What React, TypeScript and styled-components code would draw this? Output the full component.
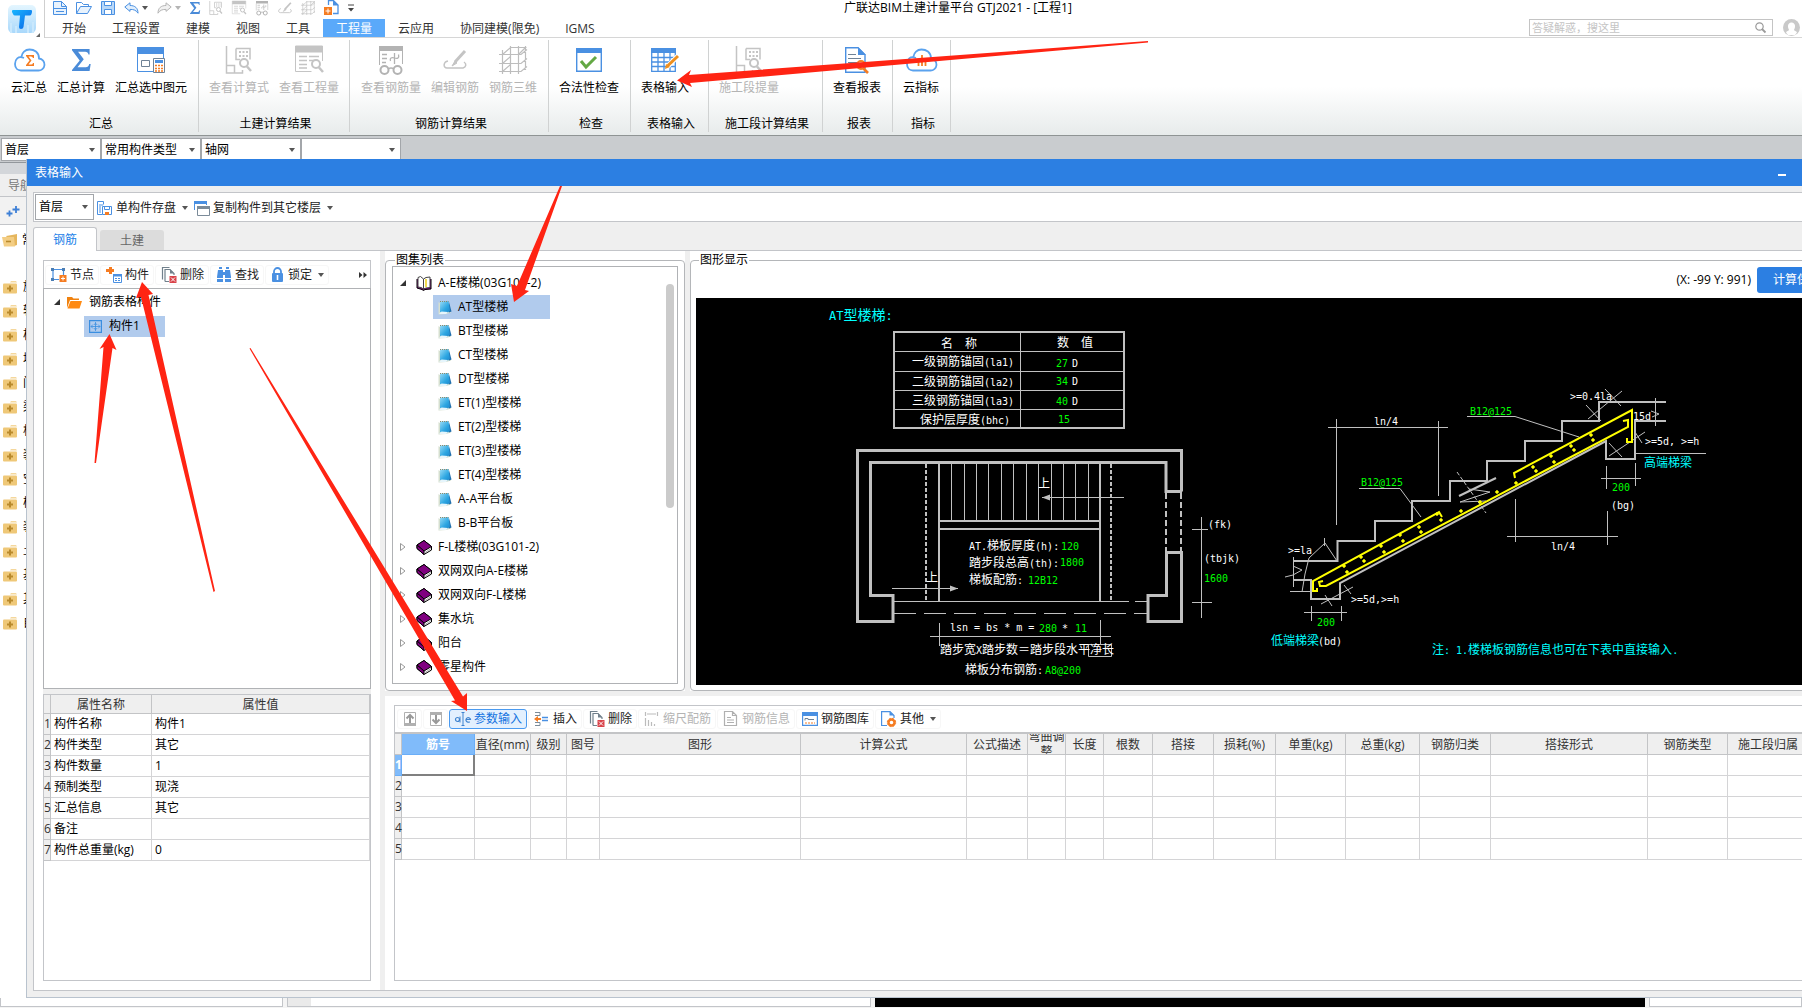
import React from 'react';
import styled, { createGlobalStyle, css } from 'styled-components';

const GlobalStyle = createGlobalStyle`
  *, *::before, *::after { box-sizing: border-box; }
  body {
    margin: 0;
    overflow: hidden;
    color: #000;
    background: #fff;
    font: 12px/16px "Open Sans", "Noto Sans CJK SC", sans-serif;
  }
  button, input, select { font: inherit; color: inherit; margin: 0; }
  button { border: 0; padding: 0; background: none; white-space: nowrap; }
  ul { list-style: none; margin: 0; padding: 0; }
`;

const BLUE = '#4a90e2';
const ORANGE = '#f57c22';
const LINE = '#c3c5c9';

/* ---------- icons ---------- */

const Svg = styled.svg`
  display: block;
  flex: none;
  fill: none;
  overflow: visible;
`;

type IconProps = { off?: boolean };

const Caret = ({ color = '#555' }: { color?: string }) => (
  <Svg width="6" height="4" viewBox="0 0 6 4"><path d="M0 0h6L3 4z" fill={color} /></Svg>
);

const LogoIcon = () => (
  <Svg width="28" height="28" viewBox="0 0 28 28">
    <defs>
      <linearGradient id="logoBg" x1="0" y1="0" x2="0" y2="1">
        <stop offset="0" stopColor="#e4f6ff" /><stop offset="1" stopColor="#a9d8fb" />
      </linearGradient>
      <linearGradient id="logoT" x1="0" y1="0" x2="1" y2="1">
        <stop offset="0" stopColor="#19b6ff" /><stop offset="1" stopColor="#0a63e6" />
      </linearGradient>
    </defs>
    <rect width="28" height="28" rx="5" fill="url(#logoBg)" />
    <path d="M3 28V18M8 28v-7M20 28v-8M25 28V17" stroke="#c9e8fd" strokeWidth="2" />
    <path d="M5 5h18q1.500 0 1 2l-.5 2q-.5 1.500-2 1.500H17L15.500 22q-.3 2-2.500 2t-2-2L12 10.500H7q-1.500 0-2-1.500l-1-2q-.5-2 1-2z" fill="url(#logoT)" />
  </Svg>
);

const NewDocIcon = () => (
  <Svg width="14" height="14" viewBox="0 0 14 14" stroke={BLUE}>
    <path d="M.5 13.500V.5h8l5 5v8z" fill="#e9f3fd" /><path d="M8.500.5v5h5M.5 7.500h13M3 10.500h8" />
  </Svg>
);
const OpenIcon = () => (
  <Svg width="16" height="14" viewBox="0 0 16 14" stroke={BLUE}>
    <path d="M.5 12.500V1.500h5l2 2h5v2" /><path d="M.5 12.500l4-7h11l-4 7z" fill="#e9f3fd" />
  </Svg>
);
const SaveIcon = () => (
  <Svg width="14" height="14" viewBox="0 0 14 14" stroke={BLUE}>
    <path d="M.5.5h13v13H.5z" fill="#b9d8f8" /><path d="M3.500.5h7v4h-7zM3.500 8.500h7v5h-7z" fill="#fff" />
  </Svg>
);
const UndoIcon = ({ off, flip }: IconProps & { flip?: boolean }) => (
  <Svg width="15" height="12" viewBox="0 0 15 12" stroke={off ? '#b5b5b5' : BLUE}>
    <path
      transform={flip ? 'matrix(-1 0 0 1 15 0)' : undefined}
      d="M.8 5L6 .8v2.700c5 0 8 2.500 8 7.700-2-3-4-3.800-8-3.800v2z"
      fill={off ? '#f1f1f1' : '#e2effc'}
    />
  </Svg>
);
const SigmaIcon = ({ size = 22, color = '#4a8bd8' }: { size?: number; color?: string }) => (
  <Svg width={size * 0.85} height={size} viewBox="0 0 17 20">
    <path d="M0 0h16v5h-1c-.4-1.800-1.200-2.600-3-2.600H5.500l5.200 7-5.700 7.200h7.500c1.700 0 2.700-1 3.200-2.900H17L16 20H0v-1l7-8.500L0 1.200z" fill={color} />
  </Svg>
);
const MagnifyMark = ({ x, y, color }: { x: number; y: number; color: string }) => (
  <g transform={`translate(${x} ${y})`}>
    <circle cx="5" cy="5" r="4" fill="#fff" stroke={color} strokeWidth="2" />
    <path d="M8 8.500l4 4.500" stroke={color} strokeWidth="2.500" />
  </g>
);
const PlanSearchIcon = ({ size = 28 }: { size?: number }) => (
  <Svg width={size} height={size} viewBox="0 0 28 28" stroke="#c4c4c4">
    <path d="M1.500 0v27h16v-3M1.500 19.500h8v7.500M11 2.500h14v11" strokeWidth="1.500" />
    <path d="M11 2.500v11h4" strokeWidth="1.500" />
    <path d="M14 6h9M14 10h9" strokeWidth="2" strokeDasharray="2 1.500" />
    <MagnifyMark x={14} y={12} color="#c4c4c4" />
  </Svg>
);
const ReportSearchIcon = ({ size = 28 }: { size?: number }) => (
  <Svg width={size} height={size} viewBox="0 0 28 28" stroke="#c4c4c4">
    <path d="M.5 0h27v6H.5z" fill="#c4c4c4" /><path d="M.5 6v19.500h16M27.500 6v9" />
    <path d="M4 10.500h8M14 10.500h10M4 14.500h8M14 14.500h5M4 18.500h8M4 22h8" strokeWidth="1.300" />
    <MagnifyMark x={16} y={13} color="#c4c4c4" />
  </Svg>
);
const GlassesIcon = ({ size = 28 }: { size?: number }) => (
  <Svg width={size} height={size} viewBox="0 0 28 28" stroke="#b3b3b3">
    <path d="M2 0h24v5H2z" fill="#b3b3b3" stroke="none" /><path d="M2.500 5v14M25.500 5v13" />
    <path d="M5 8.500h5M5 12.500h5M5 16.500h4M17.500 7v11M13.500 15c-1-3 1-4 4-3s5 0 4-3.500" strokeWidth="1.300" />
    <circle cx="7.500" cy="24" r="4" strokeWidth="2" fill="#fff" /><circle cx="20.500" cy="24" r="4" strokeWidth="2" fill="#fff" />
    <path d="M11 23q3-2 6 0" strokeWidth="1.500" />
  </Svg>
);
const PenIcon = ({ size = 24 }: { size?: number }) => (
  <Svg width={size} height={size} viewBox="0 0 24 24" stroke="#c4c4c4">
    <path d="M5 13c-5 1-5 7-1 7h16c3-1 4-4 1-6" strokeWidth="1.500" />
    <path d="M22 3L12 14" strokeWidth="3" /><path d="M12 13l-3 5 5-3z" fill="#c4c4c4" />
  </Svg>
);
const MeshIcon = ({ size = 28 }: { size?: number }) => (
  <Svg width={size} height={size} viewBox="0 0 28 28" stroke="#bdbdbd" strokeWidth="1.200">
    <path d="M3.500 4v24M11.500 0v28M19.500 0v28M26.500 0v24M0 8.500h22l6-5M0 17.500h22l6-5M0 25.500h22l6-5M3.500 8.500l8-7h16M3.500 17.500l8-7M3.500 25.500l8-7M19.500 8.500l7-7" />
  </Svg>
);
const CloudIcon = ({ children }: { children?: React.ReactNode }) => (
  <Svg width="31" height="24" viewBox="0 0 31 24">
    <path d="M7 22.500h17a6 6 0 0 0 1-12C25 4 20 1.500 15.500 1.500S8 5 7.500 8.500M10 10C4 7.500 1 11.500 1 16s3 6.500 6 6.500" stroke="#5aa2ee" strokeWidth="1.800" />
    {children}
  </Svg>
);
const CloudSumIcon = () => (
  <CloudIcon><path d="M12 7h8v3h-1q-.4-1.500-2-1.500h-2.500l3 4-3 4H17q1.700 0 2-1.500h1V18h-8v-1l3.500-4.500L12 8z" fill={ORANGE} /></CloudIcon>
);
const CloudChartIcon = () => (
  <CloudIcon><path d="M12.500 18v-6M16 18V7M19.500 18v-8" stroke={ORANGE} strokeWidth="1.800" /></CloudIcon>
);
const PickedSumIcon = () => (
  <Svg width="28" height="26" viewBox="0 0 28 26">
    <path d="M0 0h27v7H0z" fill={BLUE} /><path d="M.5 7v17.500H16M26.500 7v4" stroke={BLUE} />
    <path d="M4.500 13.500h8v6h-8z" stroke="#6f8296" />
    <path d="M16.500 11.500h11v14h-11z" stroke="#6f8296" fill="#fff" /><path d="M18 13h8v3h-8z" fill={BLUE} />
    <path d="M18 18.500h8M18 21.500h8M18 24h8" stroke={ORANGE} strokeWidth="1.500" strokeDasharray="2 1" />
  </Svg>
);
const CheckIcon = () => (
  <Svg width="26" height="24" viewBox="0 0 26 24">
    <path d="M.7.7h24.600v22.600H.7z" stroke={BLUE} strokeWidth="1.400" /><path d="M0 0h26v5H0z" fill={BLUE} />
    <path d="M5 13l5 6L20 9" stroke="#63a844" strokeWidth="3" />
  </Svg>
);
const GridPencilIcon = () => (
  <Svg width="28" height="24" viewBox="0 0 28 24">
    <path d="M0 0h25v5H0z" fill={BLUE} />
    <path d="M.7 4v19.300h23.600V4M.7 9.500h23.600M.7 14h23.600M.7 18.500h23.600M7 5v18M13 5v18M19 5v18" stroke={BLUE} strokeWidth="1.300" />
    <path d="M27 8L16 19" stroke="#fff" strokeWidth="5" /><path d="M27 8L16.500 18" stroke="#ef8f1d" strokeWidth="3" /><path d="M15 16l-1 5 5-2z" fill="#ef8f1d" />
  </Svg>
);
const PageSearchIcon = () => (
  <Svg width="24" height="27" viewBox="0 0 24 27">
    <path d="M.7.7H13l7 7v17.600H.7z" stroke={BLUE} strokeWidth="1.400" /><path d="M13 0l8 8h-8z" fill={BLUE} />
    <path d="M3 7.500h8M3 11.500h13M3 15.500h10M3 19.500h8" stroke="#6f8296" strokeWidth="1.200" />
    <circle cx="16" cy="18" r="4" stroke={ORANGE} strokeWidth="2" fill="#fff" /><path d="M18 21l5 5" stroke={ORANGE} strokeWidth="2.600" />
  </Svg>
);
const AddDocIcon = () => (
  <Svg width="15" height="15" viewBox="0 0 15 15">
    <path d="M4.500 5V.6h5l4.500 4.500v8.400H9" stroke={BLUE} strokeWidth="1.300" /><path d="M9 0l5.500 5.500H9z" fill={BLUE} /><path d="M0 7h8v8H0z" fill={ORANGE} /><path d="M4 8.500v5M1.500 11h5" stroke="#fff" />
  </Svg>
);
const MoreIcon = () => (
  <Svg width="6" height="8" viewBox="0 0 6 8"><path d="M0 1h6" stroke="#444" /><path d="M0 4h6L3 7.500z" fill="#444" /></Svg>
);
const SearchIcon = () => (
  <Svg width="11" height="11" viewBox="0 0 11 11" stroke="#9a9a9a">
    <circle cx="4.500" cy="4.500" r="3.700" strokeWidth="1.200" /><path d="M7 7l3.500 3.500" strokeWidth="1.800" />
  </Svg>
);
const AvatarIcon = () => (
  <Svg width="17" height="17" viewBox="0 0 17 17">
    <circle cx="8.500" cy="8.500" r="8.500" fill="#c9c9c9" />
    <path d="M8.500 3.500a3.500 3.500 0 0 1 3.500 4c0 2-1 3-1 3.500s2.500 1 3 2.500l-2 2.500H5l-2-2.500C3.500 12 6 11.500 6 11s-1-1.500-1-3.500a3.500 3.500 0 0 1 3.500-4z" fill="#fff" />
  </Svg>
);
const BuildingSaveIcon = () => (
  <Svg width="16" height="16" viewBox="0 0 16 16" stroke={BLUE}>
    <path d="M.5 14.500V1.500h6v3M.5 14.500h5M3 4v9M5 4v2" /><path d="M5.500 6.500h9v8h-9z" fill="#fff" /><path d="M7.500 6.500v3h5v-3" /><path d="M8 12h4v3H8z" fill={ORANGE} stroke="none" />
  </Svg>
);
const CopyWindowIcon = () => (
  <Svg width="16" height="16" viewBox="0 0 16 16">
    <path d="M.5 10V1.500h12V5" stroke={BLUE} /><path d="M0 1h13v3H0z" fill={BLUE} /><path d="M3.500 6.500h12v9h-12z" stroke="#7b8b99" fill="#fff" /><path d="M3 6h13v3H3z" fill="#7b8b99" />
  </Svg>
);
const NodeIcon = () => (
  <Svg width="16" height="16" viewBox="0 0 16 16">
    <path d="M2 2.500h10.500V9M2 2v10.500h6" stroke={BLUE} strokeWidth="1.200" />
    <path d="M0 1h3v3H0zM11 1h3v3h-3zM0 11h3v3H0z" fill="#4b7db3" /><path d="M8.500 8h7v7h-7z" fill={ORANGE} /><path d="M12 9.500v4M10 11.500h4" stroke="#fff" />
  </Svg>
);
const MemberIcon = () => (
  <Svg width="16" height="16" viewBox="0 0 16 16">
    <path d="M3 0h3v2h2v3H6v2H3V5H0V2h3z" fill={ORANGE} /><path d="M7.500 7.500h8v8h-8z" stroke={BLUE} fill="#fff" /><path d="M7 7h9v2.500H7z" fill={BLUE} />
    <path d="M9 11.500h5M9 13.500h5" stroke={BLUE} strokeDasharray="2 1" />
  </Svg>
);
const DeleteIcon = () => (
  <Svg width="16" height="16" viewBox="0 0 16 16">
    <path d="M1.500 12.500v-12h7M4 14.500v-12h5l4 4V8M4 14.500h4" stroke="#71808c" strokeWidth="1.200" /><path d="M9 2v4.500h4z" fill="#71808c" />
    <path d="M8.500 9h7v7h-7z" fill="#d9434a" /><path d="M10 10.500l4 4M14 10.500l-4 4" stroke="#fff" />
  </Svg>
);
const FindIcon = () => (
  <Svg width="16" height="16" viewBox="0 0 16 16">
    <path d="M3 0h3v2H3zM10 0h3v2h-3zM2 3h5v2h2V3h5l1 7v1H9V8H7v3H1v-1zM1 12h6v3H1zM9 12h6v3H9z" fill={BLUE} />
  </Svg>
);
const LockIcon = () => (
  <Svg width="14" height="16" viewBox="1 0 14 16">
    <path d="M4 7V4.500a3.500 3.500 0 0 1 7 0V7" stroke={BLUE} strokeWidth="1.800" /><rect x="2" y="6" width="11" height="9" rx="1" fill={BLUE} /><path d="M7.500 8v5" stroke="#fff" strokeWidth="1.600" />
  </Svg>
);
const MoveIcon = ({ down }: { down?: boolean }) => (
  <Svg width="14" height="16" viewBox="0 0 14 16">
    <path d="M1.500 1.500h11v13h-11z" stroke="#b0b0b0" /><path d={down ? 'M1 1h12v3H1z' : 'M1 12h12v3H1z'} fill="#b0b0b0" />
    <path d={down ? 'M7 4v8M3.500 8.500L7 12l3.500-3.500' : 'M7 12V4M3.500 7.500L7 4l3.500 3.500'} stroke="#999" strokeWidth="2" />
  </Svg>
);
const InsertIcon = () => (
  <Svg width="16" height="16" viewBox="0 0 16 16">
    <path d="M1 1.500h5v3H1M1 11.500h5v3H1" stroke="#7b8b99" /><path d="M0 8l4-3v2h3v2H4v2z" fill={ORANGE} /><path d="M8 6.500h6M8 9.500h6" stroke={BLUE} strokeWidth="1.500" />
  </Svg>
);
const ScaleIcon = () => (
  <Svg width="16" height="16" viewBox="0 0 16 16" stroke="#bcbcbc">
    <path d="M1.500 1v4M13.500 1v4M3 3h9M1.500 7v8M4.500 9v6M7.500 11v4M10.500 13v2" strokeWidth="1.200" />
  </Svg>
);
const InfoDocIcon = () => (
  <Svg width="16" height="16" viewBox="0 0 16 16" stroke="#b0b0b0">
    <path d="M1.500.5h8l4 4v10h-12zM9.500.5v4h4M4 6.500h4M4 9h7M4 11.500h7" strokeWidth="1.200" />
  </Svg>
);
const LibraryIcon = () => (
  <Svg width="16" height="16" viewBox="0 0 16 16">
    <path d="M.6 2h14.800v12.400H.6z" stroke={BLUE} strokeWidth="1.200" /><path d="M0 1h16v4H0z" fill={BLUE} />
    <path d="M3 9.500V7.500h3v1h6" stroke="#6f8296" /><path d="M3 12h10" stroke={ORANGE} strokeDasharray="2 1" />
  </Svg>
);
const GearDocIcon = () => (
  <Svg width="16" height="16" viewBox="0 0 16 16">
    <path d="M6 14.500H.6V.6H9l4 4V7" stroke={BLUE} strokeWidth="1.200" /><path d="M8.500 0L13 4.500H8.500z" fill={BLUE} />
    <circle cx="10.500" cy="11.500" r="3" stroke={ORANGE} strokeWidth="2.400" /><circle cx="10.500" cy="11.500" r="4.200" stroke={ORANGE} strokeDasharray="2 1.300" />
  </Svg>
);
const FolderPlusIcon = () => (
  <Svg width="15" height="13" viewBox="0 0 15 13">
    <path d="M8 0h5l1 1.500H7z" fill="#f4d79c" /><rect y="2.500" width="14" height="10" rx="1" fill="#efc878" /><path d="M7 4.500v6M4 7.500h6" stroke="#b98a2c" strokeWidth="2" />
  </Svg>
);
const FolderMinusIcon = () => (
  <Svg width="16" height="13" viewBox="0 0 16 13">
    <path d="M4 2l6-1 5-1v11l-3 1z" fill="#e5b65d" /><path d="M0 3h12l1 9.500H2z" fill="#f3cd83" /><path d="M4 7.500h5" stroke="#b98a2c" strokeWidth="1.600" />
  </Svg>
);
const FolderIcon = () => (
  <Svg width="15" height="13" viewBox="0 0 15 13">
    <path d="M0 12V1h5l1.500 1.500H12V4H3z" fill="#f0820f" /><path d="M3.500 5H15l-2.500 7.500H.5z" fill="#ff8a12" />
  </Svg>
);
const PartIcon = () => (
  <Svg width="13" height="13" viewBox="0 0 13 13" stroke="#3a8ee0">
    <path d="M.6.600h11.800v11.800H.6z" strokeWidth="1.200" /><path d="M6.500 2v9M2 6.500h9M4 4.500l-2 2 2 2M9 4.500l2 2-2 2M5 4.500q1.500-1.500 3 0M5 8.500q1.500 1.500 3 0" strokeWidth=".8" />
  </Svg>
);
const NoteIcon = () => (
  <Svg width="14" height="15" viewBox="0 0 14 15">
    <defs>
      <linearGradient id="notePage" x1="0" y1="0" x2="1" y2="1">
        <stop offset="0" stopColor="#9adcf6" /><stop offset=".6" stopColor="#2ea7e2" /><stop offset="1" stopColor="#1b86cc" />
      </linearGradient>
    </defs>
    <path d="M.5 2v12.500l8-.5 4.500-1.500V11z" fill="#d5dfcf" />
    <path d="M11 2l2.500 9.500-2.500 1z" fill="#1f6fae" />
    <path d="M2 1.500l8.500-.5 1.500 9.500-2 2-8-.5z" fill="url(#notePage)" />
    <path d="M1 14l2.500-2.500 6.500.5-2 2z" fill="#e6f5fc" />
    <path d="M2 1.500h8.500" stroke="#8f8a6a" strokeDasharray="1 1" />
  </Svg>
);
const BookIcon = () => (
  <Svg width="16" height="15" viewBox="0 0 16 15" strokeLinejoin="round">
    <path d="M1 5l7-4.500 7.500 6V10L8 14.500 1 8.500z" fill="#fff" stroke="#000" /><path d="M1 5l7-4.500 7.500 6L8 11z" fill="#800080" stroke="#000" /><path d="M1 5v3.500l7 6V11z" fill="#800080" stroke="#000" />
    <path d="M9 12.500l6-4" stroke="#999" strokeWidth=".8" />
  </Svg>
);
const OpenBookIcon = () => (
  <Svg width="16" height="15" viewBox="0 0 16 15" strokeLinejoin="round">
    <path d="M1 3v9l5 1.500 1.500 1 1.500-1 6-.5V3" fill="#800080" stroke="#000" /><path d="M2 1.500l2.500-1L7.500 3v10L5 11.500l-3-.5z" fill="#fff" stroke="#444" /><path d="M7.500 3L10 1.500l4-.5v10.500l-4 .5-2.500 1z" fill="#fff" stroke="#444" /><path d="M10 3v8" stroke="#f0dc50" strokeWidth="2" />
  </Svg>
);
const Expander = ({ open }: { open?: boolean }) => (
  <Svg width="6" height="8" viewBox="0 0 6 8">
    {open ? <path d="M6 1v6H0z" fill="#333" /> : <path d="M.5.500L5 4 .5 7.500z" stroke="#999" />}
  </Svg>
);
const PlusPlusIcon = () => (
  <Svg width="14" height="11" viewBox="0 0 14 11" stroke="#3d7fd6" strokeWidth="1.800"><path d="M3.500 4.500v6M.5 7.500h6M10 0v7M6.500 3.500h7" /></Svg>
);

/* ---------- window frame ---------- */

const Shell = styled.div`
  position: relative;
  display: flex;
  flex-direction: column;
  height: 100vh;
  overflow: hidden;
`;
const Header = styled.header`
  display: grid;
  grid-template-columns: 45px minmax(0, 1fr);
  height: 38px;
`;
const LogoButton = styled.button`
  position: relative;
  padding: 5px 8px;
  border-right: 1px solid #cfcfcf;
`;
const Corner = styled.i`
  position: absolute;
  right: 4px;
  bottom: 1px;
  border: 2px solid;
  border-color: transparent #666 #666 transparent;
`;
const HeaderMain = styled.div`border-bottom: 1px solid #d6d6d6;`;
const TitleRow = styled.div`
  display: flex;
  align-items: center;
  height: 15px;
`;
const QuickBar = styled.div`
  display: flex;
  align-items: center;
  gap: 9px;
  width: 313px;
  padding-left: 8px;
`;
const QuickButton = styled.button`
  display: flex;
  align-items: center;
  gap: 3px;
`;
const WindowTitle = styled.h1`
  flex: 1;
  margin: 0 244px 0 0;
  font-size: 12px;
  font-weight: 400;
  line-height: 16px;
  text-align: center;
`;
const MenuRow = styled.div`
  display: flex;
  align-items: flex-end;
  height: 22px;
  padding-right: 2px;
`;
const Menu = styled.nav`
  display: flex;
  flex: 1;
  padding-left: 4px;
`;
const MenuTab = styled.button<{ $active?: boolean }>`
  height: 18px;
  padding: 1px 13px 0;
  line-height: 18px;
  color: ${p => (p.$active ? '#fff' : '#333')};
  background: ${p => (p.$active ? '#5aa9fa' : 'transparent')};
`;
const SearchBox = styled.label`
  display: flex;
  align-items: center;
  width: 244px;
  height: 17px;
  margin: 0 10px 1px 0;
  padding: 0 6px 0 2px;
  border: 1px solid #c4c4c4;
`;
const SearchInput = styled.input`
  flex: 1;
  min-width: 0;
  height: 15px;
  padding: 0;
  border: 0;
  outline: 0;
  font-size: 11px;
  line-height: 15px;
  &::placeholder { color: #c4c4c4; opacity: 1; }
`;
const AvatarButton = styled.button`margin-bottom: 1px;`;

/* ---------- ribbon ---------- */

const Ribbon = styled.div`
  display: flex;
  height: 98px;
  padding: 2px 0 3px;
  border-bottom: 1px solid #8f9494;
  background: linear-gradient(#fff 50%, #e7ebeb);
`;
const RibbonGroup = styled.section<{ $w: number; $pad?: number }>`
  display: flex;
  flex-direction: column;
  flex: none;
  min-width: ${p => p.$w}px;
  padding: 0 4px 0 ${p => p.$pad ?? 5}px;
  border-right: 1px solid #d0d2d2;
`;
const RibbonButtons = styled.div`
  display: flex;
  flex: none;
  height: 76px;
`;
const RibbonButton = styled.button`
  display: flex;
  flex-direction: column;
  align-items: center;
  padding: 0 5px;
  &:disabled { color: #b4b4b4; }
`;
const RibbonIcon = styled.span`
  display: flex;
  align-items: center;
  height: 40px;
`;
const RibbonLabel = styled.h2`
  margin: 0;
  padding-left: 2px;
  font-size: 12px;
  font-weight: 400;
  line-height: 16px;
  text-align: center;
`;

/* ---------- shared controls ---------- */

const ComboFrame = styled.div<{ $w: number; $h: number }>`
  display: flex;
  align-items: center;
  width: ${p => p.$w}px;
  height: ${p => p.$h}px;
  padding: 0 5px 0 3px;
  border: 1px solid #a3a6aa;
  background: #fff;
`;
const Select = styled.select`
  flex: 1;
  min-width: 0;
  padding: 0;
  border: 0;
  appearance: none;
  background: transparent;
`;
const Combo = ({ label, value, w, h }: { label: string; value: string; w: number; h: number }) => (
  <ComboFrame $w={w} $h={h}>
    <Select aria-label={label} defaultValue={value}><option value={value}>{value}</option></Select>
    <Caret />
  </ComboFrame>
);

const ToolButton = styled.button<{ $active?: boolean; $flat?: boolean }>`
  display: flex;
  align-items: center;
  gap: 3px;
  height: 20px;
  padding: 0 4px 0 5px;
  border: 1px solid #f7f7f7;
  border-radius: 3px;
  color: #222;
  line-height: 18px;
  ${p => p.$flat && css`padding: 1px 3px 0; border: 0;`}
  ${p => p.$active && css`color: #1473e0; border-color: #4a9af0; background: #e3f0fe;`}
  &:disabled { color: #b4b4b4; }
  span + svg { margin-left: 3px; }
`;

/* ---------- main window behind the dialog ---------- */

const SelectorBar = styled.div`
  display: flex;
  flex: none;
  height: 27px;
  padding: 2px 0 0 1px;
  border-bottom: 1px solid #92979c;
  background: #c9cccf;
`;
const Desk = styled.div`
  flex: 1;
  min-height: 0;
  padding-top: 11px;
  background: #d3d6da;
`;
const Nav = styled.aside`
  width: 26px;
  height: 100%;
  overflow: hidden;
  white-space: nowrap;
  background: #fff;
`;
const NavTitle = styled.div`
  height: 23px;
  padding-left: 8px;
  border-bottom: 1px solid ${LINE};
  background: #efefef;
  color: #777;
  line-height: 24px;
`;
const NavTools = styled.div`
  height: 28px;
  padding: 9px 6px;
  border-bottom: 1px solid ${LINE};
  background: #f2f2f2;
`;
const NavItem = styled.li<{ $root?: boolean }>`
  display: flex;
  align-items: center;
  gap: ${p => (p.$root ? 4 : 5)}px;
  height: 24px;
  margin-bottom: ${p => (p.$root ? 23 : 0)}px;
  padding-left: ${p => (p.$root ? 2 : 3)}px;
  &:first-child { margin-top: 3px; }
`;
const BottomStrip = styled.div`
  display: flex;
  flex: none;
  gap: 4px;
  height: 10px;
  background: #f4f4f4;
`;
const StripBox = styled.div<{ $w?: number; $dark?: boolean; $stub?: boolean }>`
  flex: ${p => (p.$w ? `0 0 ${p.$w}px` : '1')};
  height: 9px;
  border: 1px solid ${LINE};
  border-top: 0;
  background: #fff;
  ${p => p.$stub && css`background: linear-gradient(90deg, #eaeaea 23px, #fff 23px);`}
  ${p => p.$dark && css`background: #000; border: 0;`}
`;

/* ---------- dialog ---------- */

const Dialog = styled.section`
  position: absolute;
  top: 159px;
  right: -48px;
  bottom: 10px;
  left: 26px;
  display: flex;
  flex-direction: column;
  border: solid #b9c3ce;
  border-width: 0 0 1px 1px;
  background: #efefef;
`;
const DialogTitle = styled.header`
  display: flex;
  flex: none;
  align-items: center;
  justify-content: space-between;
  height: 27px;
  padding: 0 64px 0 8px;
  color: #fff;
  background: #2c7fe2;
`;
const MinButton = styled.button`
  width: 8px;
  height: 2px;
  margin-top: 4px;
  background: #fff;
`;
const DialogBody = styled.div`
  display: flex;
  flex: 1;
  flex-direction: column;
  min-height: 0;
  padding: 6px;
`;
const DialogTools = styled.div`
  display: flex;
  flex: none;
  align-items: center;
  height: 30px;
  padding-left: 1px;
  border: 1px solid ${LINE};
  background: #fff;
`;
const Tabs = styled.div`
  display: flex;
  flex: none;
  align-items: flex-end;
  gap: 3px;
  height: 28px;
`;
const Tab = styled.button<{ $active?: boolean }>`
  width: 64px;
  height: 20px;
  border-radius: 3px 3px 0 0;
  color: #666;
  background: #dcdcdc;
  line-height: 22px;
  ${p => p.$active && css`
    position: relative;
    height: 24px;
    margin-bottom: -1px;
    border: 1px solid ${LINE};
    border-bottom: 0;
    color: #1b7fe8;
    background: #fff;
    line-height: 24px;
  `}
`;
const Pane = styled.div`
  display: grid;
  flex: 1;
  grid-template-columns: 346px minmax(0, 1fr);
  gap: 5px;
  min-height: 0;
  border: 1px solid ${LINE};
`;
const LeftColumn = styled.div`
  display: grid;
  grid-template-rows: 28px minmax(0, 7fr) 5px minmax(0, 5fr);
  min-height: 0;
  padding: 9px;
  background: #fff;
`;
const LeftTools = styled.div`
  display: flex;
  align-items: center;
  gap: 1px;
  padding: 0 3px 0 1px;
  border: 1px solid ${LINE};
  border-bottom: 0;
`;
const Overflow = styled.button`
  margin-left: auto;
`;
const TreeBox = styled.ul`
  padding-top: 1px;
  overflow: hidden;
  border: 1px solid #b0b2b5;
`;
const Splitter = styled.div`background: #efefef;`;
const TreeRow = styled.li`
  display: flex;
  align-items: center;
  height: 24px;
`;
const TreeItem = styled.button<{ $selected?: boolean; $indent: number; $w?: number; $h?: number; $gap?: number }>`
  display: flex;
  align-items: center;
  gap: ${p => p.$gap ?? 6}px;
  height: ${p => p.$h ?? 24}px;
  min-width: ${p => p.$w ?? 0}px;
  margin-left: ${p => p.$indent}px;
  padding: 0 4px 0 5px;
  background: ${p => (p.$selected ? '#b1cbed' : 'transparent')};
`;
const Properties = styled.div`
  overflow: hidden;
  border: 1px solid ${LINE};
`;
const Table = styled.table`
  border-collapse: separate;
  border-spacing: 0;
  table-layout: fixed;
`;
const PropTable = styled(Table)`width: 100%;`;
const Th = styled.th<{ $h: number; $on?: boolean }>`
  height: ${p => p.$h}px;
  padding: 0;
  border: solid #c3c4c6;
  border-width: 0 1px 1px 0;
  background: #efefef;
  color: #333;
  font-weight: 400;
  ${p => p.$on && css`background: #80bbfa; border-color: #6aaef8; color: #fff; font-weight: 700;`}
`;
const ThText = styled.span<{ $h: number }>`
  display: flex;
  align-items: center;
  justify-content: center;
  height: ${p => p.$h - 1}px;
  overflow: hidden;
  line-height: 15px;
`;
const RowHead = styled(Th)`
  text-align: left;
  white-space: nowrap;
  line-height: 20px;
`;
const Td = styled.td<{ $cursor?: boolean }>`
  height: 21px;
  padding: 0 3px;
  border: solid #d4d4d6;
  border-width: 0 1px 1px 0;
  line-height: 20px;
  ${p => p.$cursor && css`border-color: #808080; box-shadow: inset -1px -1px 0 #808080;`}
`;
const RightColumn = styled.div`
  display: grid;
  grid-template-rows: minmax(0, 3fr) minmax(0, 2fr);
  gap: 5px;
  min-height: 0;
`;
const TopArea = styled.div`
  display: grid;
  grid-template-columns: 300px minmax(0, 1fr);
  gap: 5px;
  min-height: 0;
`;
const White = styled.div`
  display: flex;
  min-width: 0;
  min-height: 0;
  background: #fff;
`;
const Group = styled.fieldset<{ $pad: number }>`
  display: flex;
  flex: 1;
  flex-direction: column;
  min-width: 0;
  min-height: 0;
  margin: 3px 0 0;
  padding: 0 ${p => p.$pad}px ${p => p.$pad}px;
  border: 1px solid #b4b6b9;
  border-radius: 4px;
`;
const Legend = styled.legend`
  margin-left: 3px;
  padding: 0 1px;
  line-height: 12px;
`;
const Atlas = styled.div`
  display: flex;
  flex: 1;
  justify-content: space-between;
  min-height: 0;
  padding: 4px 3px 0 7px;
  border: 1px solid #b0b2b5;
`;
const ScrollTrack = styled.div`
  width: 8px;
  padding-top: 13px;
`;
const ScrollThumb = styled.div`
  height: 56%;
  border-radius: 4px;
  background: #cbcbcb;
`;
const ViewTools = styled.div`
  display: flex;
  flex: none;
  align-items: flex-start;
  justify-content: flex-end;
  gap: 6px;
  height: 32px;
  padding-top: 1px;
`;
const Coords = styled.output`line-height: 26px;`;
const SaveButton = styled.button`
  width: 80px;
  height: 26px;
  border-radius: 3px;
  color: #fff;
  background: #2c7fe2;
`;
const CadView = styled.svg`
  display: block;
  flex: 1;
  width: 100%;
  min-height: 0;
  background: #000;
  font-family: "DejaVu Sans Mono", "Noto Sans CJK SC", monospace;
`;
const BottomArea = styled.div`
  display: flex;
  min-height: 0;
  padding: 9px 0 9px 9px;
  background: #fff;
`;
const BarPanel = styled.div`
  flex: 1;
  min-width: 0;
  overflow: hidden;
  border: 1px solid ${LINE};
`;
const BarTools = styled.div`
  display: flex;
  align-items: center;
  gap: 1px;
  height: 28px;
  padding: 0 2px;
  border-bottom: 2px solid #c3c4c6;
`;
const BarTable = styled(Table)`width: 1414px;`;
const Annotations = styled.svg`
  position: absolute;
  top: 0;
  left: 0;
  fill: #ff2413;
  pointer-events: none;
`;

/* ---------- drawing ---------- */

const FG = '#c0c0c0';
const GREEN = '#00ff00';
const CYAN = '#00ffff';

/* y is the vertical middle of the text; Latin runs use the half-width size */
const CadText = ({ x, y, t, c = '#fff', s = 12 }: { x: number; y: number; t: string; c?: string; s?: number }) => (
  <text x={x} y={y + 4} fill={c} xmlSpace="preserve">
    {(t.match(/[\u0020-\u007e]+|[^\u0020-\u007e]+/g) || []).map((run, i) => (
      <tspan key={i} fontSize={run.charCodeAt(0) < 127 ? s - 2 : s}>{run}</tspan>
    ))}
  </text>
);

const TEXTS: [number, number, string, string?, number?][] = [
  [829, 316, 'AT型楼梯:', CYAN, 14],
  [941, 344, '名　称'], [1057, 343, '数　值'],
  [912, 362, '一级钢筋锚固(la1)'], [912, 382, '二级钢筋锚固(la2)'], [912, 401, '三级钢筋锚固(la3)'], [920, 420, '保护层厚度(bhc)'],
  [1056, 363, '27', GREEN], [1072, 363, 'D'], [1056, 381, '34', GREEN], [1072, 381, 'D'],
  [1056, 401, '40', GREEN], [1072, 401, 'D'], [1058, 419, '15', GREEN],
  [1038, 484, '上'], [926, 578, '上'],
  [969, 546, 'AT.梯板厚度(h):'], [1061, 546, '120', GREEN],
  [969, 563, '踏步段总高(th):'], [1060, 562, '1800', GREEN],
  [969, 580, '梯板配筋:'], [1028, 580, '12B12', GREEN],
  [950, 627, 'lsn = bs * m ='], [1039, 628, '280', GREEN], [1062, 628, '*'], [1075, 628, '11', GREEN],
  [940, 650, '踏步宽X踏步数＝踏步段水平净长'],
  [965, 670, '梯板分布钢筋:'], [1045, 670, 'A8@200', GREEN],
  [1208, 524, '(fk)'], [1204, 558, '(tbjk)'], [1204, 578, '1600', GREEN],
  [1374, 421, 'ln/4'], [1470, 411, 'B12@125', GREEN], [1361, 482, 'B12@125', GREEN],
  [1570, 396, '>=0.4la'], [1633, 416, '15d'], [1645, 441, '>=5d, >=h'], [1644, 463, '高端梯梁', CYAN],
  [1612, 487, '200', GREEN], [1611, 505, '(bg)'], [1551, 546, 'ln/4'],
  [1288, 550, '>=la'], [1351, 599, '>=5d,>=h'], [1317, 622, '200', GREEN],
  [1271, 641, '低端梯梁', CYAN], [1318, 641, '(bd)'],
  [1432, 650, '注: 1.楼梯板钢筋信息也可在下表中直接输入.', CYAN],
];

const DOTS = [
  [1344, 566], [1347, 572], [1361, 557], [1364, 561], [1381, 546], [1384, 552], [1400, 535], [1403, 541],
  [1419, 527], [1421, 532], [1437, 514], [1441, 520], [1461, 511], [1480, 502], [1497, 492], [1516, 483],
  [1536, 471], [1533, 467], [1554, 462], [1551, 456], [1574, 450], [1571, 446], [1593, 440], [1591, 435],
];

const StairDrawing = () => (
  <CadView role="img" aria-label="AT型楼梯">
    <g transform="translate(-696 -298)" stroke={FG} fill="none">
      <path strokeWidth="2" d="M894 332h230v96H894z" />
      <path d="M1020.500 332v96M894 351.500h230M894 371.500h230M894 390.500h230M894 409.500h230" />
      <path strokeWidth="3" d="M1182 491.500h-16V462.500H870.500V595.500H893V621.500H857.500V450.500H1181.500V491.500M1181.500 552.500h-15V595.500H1148V621.500h33.500z" />
      <path strokeWidth="2" strokeDasharray="6 3" d="M1166 493v59M1181 493v59" />
      <path strokeWidth="2" strokeDasharray="4 2" d="M926 464v137M1111 464v137" />
      <path strokeWidth="2" d="M939 464v137M1100 464v137M939 521h161M939 529h161" />
      <path d="M951.500 464v57M964.500 464v57M976.500 464v57M988.500 464v57M1001.500 464v57M1013.500 464v57M1026.500 464v57M1038.500 464v57M1051.500 464v57M1063.500 464v57M1075.500 464v57M1088.500 464v57" />
      <path d="M894 601.500h235M1135 601.500h12M892 588.500h66M1124 497.500h-82" />
      <path strokeDasharray="22 8" d="M894 613.500h254" />
      <path fill={FG} stroke="none" d="M958 588.500l-8-3v6zM1042 497.500l8-3v6z" />
      <path d="M930 636.500h181M939.500 623v23M1100.500 620v24M1088.500 644.500h23v12h-23z" />
      <path d="M1201.500 517v101M1192 529.500h16M1192 602.500h20" />

      <path strokeWidth="2" d="M1293 561h44.500V541H1375V521h37V501h38V481h37V461h38V441h37V421h37V402h67M1666 421h-31v38h-29V441L1340 583v16h-29V580h-18" />
      <path d="M1635 453.500h71M1336.500 419v106M1438.500 421v75M1328 427.500h120M1467 416.500h48l64 20.500M1359 488.500h41l21 28.500" />
      <path d="M1601 478.500h40M1606.500 466v23M1635.500 463v23M1507 536.500h111M1515.500 499v43M1607.500 511v34M1304 612.500h43M1311.500 606v15M1341.500 606v15" />
      <path d="M1293.500 557v30M1285 577l8-2 9-5-9-4M1290 591.500h21M1302 592l3-18 4-16 16-15 12 18M1324.500 538v8" />
      <path d="M1321 604l32-17M1325 595l7 11M1344 585l7 9" />
      <path strokeWidth="2" d="M1459 496l37-18" />
      <path d="M1469 489l21 3-30 10 26-1" />
      <path strokeDasharray="4 2" d="M1457 472l29 41" />
      <path d="M1605 389l16 17M1622 391l-34 28M1586 405l15 16M1655.500 398v28M1651 411l8 3-7 3M1635 432l7 11M1645 432l-36 24M1609 443l13 14" />
      <g stroke="#ffff00" strokeWidth="2">
        <path d="M1317 588v3h-4V581l126-69 3 5M1323 581l-4 1 1 4h6l302-159v-7l-5 1M1515 478l-1-5 118-63v32h-5v-4" />
        {DOTS.map(([x, y], i) => <circle key={i} cx={x} cy={y} r="1.300" strokeWidth="1" fill="#ffff00" />)}
      </g>
      <g stroke="none">
        {TEXTS.map(([x, y, t, c, s], i) => <CadText key={i} x={x} y={y} t={t} c={c} s={s} />)}
      </g>
    </g>
  </CadView>
);

/* ---------- data ---------- */

const MENU = ['开始', '工程设置', '建模', '视图', '工具', '工程量', '云应用', '协同建模(限免)', 'IGMS'];

const RIBBON: { label: string; w: number; pad?: number; items: [string, React.ReactNode, boolean?][] }[] = [
  { label: '汇总', w: 199, pad: 6, items: [['云汇总', <CloudSumIcon />], ['汇总计算', <SigmaIcon />], ['汇总选中图元', <PickedSumIcon />]] },
  { label: '土建计算结果', w: 151, items: [['查看计算式', <PlanSearchIcon />, true], ['查看工程量', <ReportSearchIcon />, true]] },
  { label: '钢筋计算结果', w: 199, pad: 6, items: [['查看钢筋量', <GlassesIcon />, true], ['编辑钢筋', <PenIcon />, true], ['钢筋三维', <MeshIcon />, true]] },
  { label: '检查', w: 82, items: [['合法性检查', <CheckIcon />]] },
  { label: '表格输入', w: 78, items: [['表格输入', <GridPencilIcon />]] },
  { label: '施工段计算结果', w: 114, items: [['施工段提量', <PlanSearchIcon />, true]] },
  { label: '报表', w: 70, items: [['查看报表', <PageSearchIcon />]] },
  { label: '指标', w: 58, items: [['云指标', <CloudChartIcon />]] },
];

const NAV = ['施工段', '轴线', '柱', '墙', '门窗洞', '梁', '板', '装配式', '空心楼盖', '楼梯', '装修', '土方', '基础', '其它', '自定义'];

const STAIRS = ['AT型楼梯', 'BT型楼梯', 'CT型楼梯', 'DT型楼梯', 'ET(1)型楼梯', 'ET(2)型楼梯', 'ET(3)型楼梯', 'ET(4)型楼梯', 'A-A平台板', 'B-B平台板'];
const BOOKS = ['F-L楼梯(03G101-2)', '双网双向A-E楼梯', '双网双向F-L楼梯', '集水坑', '阳台', '零星构件'];

const PROPS = [['构件名称', '构件1'], ['构件类型', '其它'], ['构件数量', '1'], ['预制类型', '现浇'], ['汇总信息', '其它'], ['备注', ''], ['构件总重量(kg)', '0']];

const COLUMNS: [string, number][] = [
  ['筋号', 73], ['直径(mm)', 56], ['级别', 36], ['图号', 33], ['图形', 201], ['计算公式', 166], ['公式描述', 61], ['弯曲调整', 38],
  ['长度', 38], ['根数', 49], ['搭接', 61], ['损耗(%)', 62], ['单重(kg)', 70], ['总重(kg)', 74], ['钢筋归类', 71], ['搭接形式', 157],
  ['钢筋类型', 80], ['施工段归属', 81],
];

export default function App() {
  return (
    <Shell>
      <GlobalStyle />
      <Header>
        <LogoButton aria-label="主菜单"><LogoIcon /><Corner /></LogoButton>
        <HeaderMain>
          <TitleRow>
            <QuickBar>
              <QuickButton aria-label="新建"><NewDocIcon /></QuickButton>
              <QuickButton aria-label="打开"><OpenIcon /></QuickButton>
              <QuickButton aria-label="保存"><SaveIcon /></QuickButton>
              <QuickButton aria-label="撤销"><UndoIcon /><Caret /></QuickButton>
              <QuickButton aria-label="恢复"><UndoIcon off flip /><Caret color="#b5b5b5" /></QuickButton>
              <QuickButton aria-label="汇总计算"><SigmaIcon size={12} /></QuickButton>
              <QuickButton aria-label="查看计算式"><PlanSearchIcon size={14} /></QuickButton>
              <QuickButton aria-label="查看工程量"><ReportSearchIcon size={14} /></QuickButton>
              <QuickButton aria-label="查看钢筋量"><GlassesIcon size={14} /></QuickButton>
              <QuickButton aria-label="编辑钢筋"><PenIcon size={14} /></QuickButton>
              <QuickButton aria-label="钢筋三维"><MeshIcon size={14} /></QuickButton>
              <QuickButton aria-label="添加"><AddDocIcon /></QuickButton>
              <QuickButton aria-label="更多"><MoreIcon /></QuickButton>
            </QuickBar>
            <WindowTitle>广联达BIM土建计量平台 GTJ2021 - [工程1]</WindowTitle>
          </TitleRow>
          <MenuRow>
            <Menu>{MENU.map(m => <MenuTab key={m} $active={m === '工程量'}>{m}</MenuTab>)}</Menu>
            <SearchBox>
              <SearchInput aria-label="搜索" placeholder="答疑解惑，搜这里" />
              <SearchIcon />
            </SearchBox>
            <AvatarButton aria-label="用户"><AvatarIcon /></AvatarButton>
          </MenuRow>
        </HeaderMain>
      </Header>

      <Ribbon>
        {RIBBON.map(g => (
          <RibbonGroup key={g.label} $w={g.w} $pad={g.pad}>
            <RibbonButtons>
              {g.items.map(([name, icon, off]) => (
                <RibbonButton key={name} disabled={off}><RibbonIcon>{icon}</RibbonIcon>{name}</RibbonButton>
              ))}
            </RibbonButtons>
            <RibbonLabel>{g.label}</RibbonLabel>
          </RibbonGroup>
        ))}
      </Ribbon>

      <SelectorBar>
        <Combo label="楼层" value="首层" w={100} h={23} />
        <Combo label="构件类型" value="常用构件类型" w={100} h={23} />
        <Combo label="构件分类" value="轴网" w={100} h={23} />
        <Combo label="构件" value="" w={100} h={23} />
      </SelectorBar>
      <Desk>
        <Nav>
          <NavTitle>导航树</NavTitle>
          <NavTools><PlusPlusIcon /></NavTools>
          <ul>
            <NavItem $root><FolderMinusIcon />常用构件类型</NavItem>
            {NAV.map(n => <NavItem key={n}><FolderPlusIcon />{n}</NavItem>)}
          </ul>
        </Nav>
      </Desk>
      <BottomStrip>
        <StripBox $w={283} />
        <StripBox $w={584} $stub />
        <StripBox $dark />
        <StripBox $w={153} />
      </BottomStrip>

      <Dialog aria-label="表格输入">
        <DialogTitle>表格输入<MinButton aria-label="最小化" /></DialogTitle>
        <DialogBody>
          <DialogTools>
            <Combo label="当前楼层" value="首层" w={59} h={26} />
            <ToolButton $flat><BuildingSaveIcon /><span>单构件存盘</span><Caret /></ToolButton>
            <ToolButton $flat><CopyWindowIcon /><span>复制构件到其它楼层</span><Caret /></ToolButton>
          </DialogTools>
          <Tabs>
            <Tab $active>钢筋</Tab>
            <Tab>土建</Tab>
          </Tabs>
          <Pane>
            <LeftColumn>
              <LeftTools>
                <ToolButton><NodeIcon /><span>节点</span></ToolButton>
                <ToolButton><MemberIcon /><span>构件</span></ToolButton>
                <ToolButton><DeleteIcon /><span>删除</span></ToolButton>
                <ToolButton><FindIcon /><span>查找</span></ToolButton>
                <ToolButton><LockIcon /><span>锁定</span><Caret /></ToolButton>
                <Overflow aria-label="更多工具">
                  <Svg width="8" height="6" viewBox="0 0 8 6"><path d="M0 0l3.500 3L0 6zM4.500 0L8 3 4.500 6z" fill="#333" /></Svg>
                </Overflow>
              </LeftTools>
              <TreeBox>
                <TreeRow><TreeItem $indent={5} $gap={7}><Expander open /><FolderIcon />钢筋表格构件</TreeItem></TreeRow>
                <TreeRow><TreeItem $indent={40} $w={81} $h={21} $gap={7} $selected><PartIcon />构件1</TreeItem></TreeRow>
              </TreeBox>
              <Splitter />
              <Properties>
                <PropTable>
                  <colgroup><col style={{ width: 7 }} /><col style={{ width: 101 }} /><col /></colgroup>
                  <thead><tr>{['', '属性名称', '属性值'].map(h => <Th key={h} $h={19}><ThText $h={19}>{h}</ThText></Th>)}</tr></thead>
                  <tbody>
                    {PROPS.map(([k, v], i) => (
                      <tr key={k}><RowHead $h={21} scope="row">{i + 1}</RowHead><Td>{k}</Td><Td>{v}</Td></tr>
                    ))}
                  </tbody>
                </PropTable>
              </Properties>
            </LeftColumn>

            <RightColumn>
              <TopArea>
                <White>
                  <Group $pad={6}>
                    <Legend>图集列表</Legend>
                    <Atlas>
                      <ul>
                        <TreeRow><Expander open /><TreeItem $indent={5}><OpenBookIcon />A-E楼梯(03G101-2)</TreeItem></TreeRow>
                        {STAIRS.map((s, i) => (
                          <TreeRow key={s}><TreeItem $indent={33} $w={117} $selected={i === 0}><NoteIcon />{s}</TreeItem></TreeRow>
                        ))}
                        {BOOKS.map(b => (
                          <TreeRow key={b}><Expander /><TreeItem $indent={5}><BookIcon />{b}</TreeItem></TreeRow>
                        ))}
                      </ul>
                      <ScrollTrack><ScrollThumb /></ScrollTrack>
                    </Atlas>
                  </Group>
                </White>
                <White>
                  <Group $pad={5}>
                    <Legend>图形显示</Legend>
                    <ViewTools>
                      <Coords>(X: -99 Y: 991)</Coords>
                      <SaveButton>计算保存</SaveButton>
                    </ViewTools>
                    <StairDrawing />
                  </Group>
                </White>
              </TopArea>

              <BottomArea>
                <BarPanel>
                  <BarTools>
                    <ToolButton aria-label="上移"><MoveIcon /></ToolButton>
                    <ToolButton aria-label="下移"><MoveIcon down /></ToolButton>
                    <ToolButton $active>
                      <Svg width="16" height="16" viewBox="0 0 16 16" stroke="#3f83cf">
                        <circle cx="2.500" cy="8.500" r="2" strokeWidth="1.200" /><path d="M5 5.500v6M8 1.500v13M6.500 1.500h3M6.500 14.500h3" />
                        <path d="M11 8.500h4.500a2.300 2.300 0 1 0-.8 2.200" strokeWidth="1.200" />
                      </Svg>
                      <span>参数输入</span>
                    </ToolButton>
                    <ToolButton><InsertIcon /><span>插入</span></ToolButton>
                    <ToolButton><DeleteIcon /><span>删除</span></ToolButton>
                    <ToolButton disabled><ScaleIcon /><span>缩尺配筋</span></ToolButton>
                    <ToolButton disabled><InfoDocIcon /><span>钢筋信息</span></ToolButton>
                    <ToolButton><LibraryIcon /><span>钢筋图库</span></ToolButton>
                    <ToolButton><GearDocIcon /><span>其他</span><Caret /></ToolButton>
                  </BarTools>
                  <BarTable>
                    <colgroup><col style={{ width: 7 }} />{COLUMNS.map(([n, w]) => <col key={n} style={{ width: w }} />)}</colgroup>
                    <thead>
                      <tr>
                        <Th $h={21} />
                        {COLUMNS.map(([n], i) => <Th key={n} $h={21} $on={i === 0}><ThText $h={21}>{n}</ThText></Th>)}
                      </tr>
                    </thead>
                    <tbody>
                      {[1, 2, 3, 4, 5].map(r => (
                        <tr key={r}>
                          <RowHead $h={21} $on={r === 1} scope="row">{r}</RowHead>
                          {COLUMNS.map(([n], i) => <Td key={n} $cursor={r === 1 && i === 0} />)}
                        </tr>
                      ))}
                    </tbody>
                  </BarTable>
                </BarPanel>
              </BottomArea>
            </RightColumn>
          </Pane>
        </DialogBody>
      </Dialog>

      <Annotations width="1160" height="720" aria-hidden="true">
        <path d="M1148 41L689 75l2-5-14 10.500L692 87l-2-4 458-40.500z" />
        <path d="M560 186l-43 100-6-2 3 18 15-11-4-1 37-104z" />
        <path d="M94.500 463l9-116-4 2 10-15 7 16-4-2-16.500 115z" />
        <path d="M213.500 592L141 297l-5 1 6-16 11 12-4.500 1L215 591z" />
        <path d="M249.500 348.500L455 700.500l-4 .5 16 10v-18l-4 3.500L250.500 348z" />
      </Annotations>
    </Shell>
  );
}
